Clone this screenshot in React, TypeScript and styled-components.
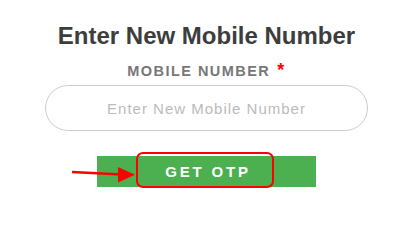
import React from 'react';
import styled, { createGlobalStyle } from 'styled-components';

const GlobalStyle = createGlobalStyle`
  html, body {
    margin: 0;
    padding: 0;
    background: #ffffff;
  }
  body {
    font-family: "Liberation Sans", Arial, sans-serif;
  }
`;

const Page = styled.div`
  width: 406px;
  height: 204px;
  display: flex;
  flex-direction: column;
  align-items: center;
  padding: 21px 0 0 7px;
  box-sizing: border-box;
`;

const Title = styled.h2`
  margin: 0;
  font-size: 24px;
  line-height: 30px;
  font-weight: 700;
  color: #3d3d3d;
`;

const Label = styled.label`
  margin-top: 11px;
  font-size: 14.5px;
  line-height: 18px;
  font-weight: 700;
  letter-spacing: 1.45px;
  color: #777777;
  display: flex;
  align-items: flex-start;
  column-gap: 7px;
`;

const Required = styled.span`
  color: #ff0000;
  font-size: 18px;
  line-height: 16px;
`;

const Input = styled.input`
  margin-top: 5px;
  width: 323px;
  height: 46px;
  box-sizing: border-box;
  border: 1px solid #cccccc;
  border-radius: 23px;
  text-align: center;
  font-family: "Liberation Sans", Arial, sans-serif;
  font-size: 15px;
  letter-spacing: 1px;
  color: #333;
  outline: none;
  &::placeholder {
    color: #bbbbbb;
  }
`;

const ActionRow = styled.div`
  margin-top: 25px;
  position: relative;
  display: flex;
`;

const SubmitBar = styled.button`
  width: 219px;
  height: 31px;
  border: 0;
  background: #4caf50;
  color: #ffffff;
  font-family: "Liberation Sans", Arial, sans-serif;
  font-size: 15px;
  font-weight: 700;
  letter-spacing: 2.8px;
  padding: 0 0 0 3px;
  cursor: pointer;
`;

/* annotation: red highlight round the button text */
const Highlight = styled.div`
  position: absolute;
  left: 39px;
  top: -4px;
  width: 138px;
  height: 36px;
  box-sizing: border-box;
  border: 2.5px solid #ff0000;
  border-radius: 7px;
  pointer-events: none;
`;

const Arrow = styled.svg`
  position: absolute;
  left: -25px;
  top: 9px;
  overflow: visible;
  pointer-events: none;
`;

export default function App() {
  return (
    <>
      <GlobalStyle />
      <Page>
        <Title>Enter New Mobile Number</Title>
        <Label>
          MOBILE NUMBER <Required>*</Required>
        </Label>
        <Input placeholder="Enter New Mobile Number" />
        <ActionRow>
          <SubmitBar type="button">GET OTP</SubmitBar>
          <Highlight />
          <Arrow width="64" height="18" viewBox="0 0 64 18">
            <line x1="0" y1="7" x2="50" y2="9.5" stroke="#ff0000" strokeWidth="2.5" />
            <polygon points="46,2 63,9.7 46,17.5" fill="#ff0000" />
          </Arrow>
        </ActionRow>
      </Page>
    </>
  );
}
